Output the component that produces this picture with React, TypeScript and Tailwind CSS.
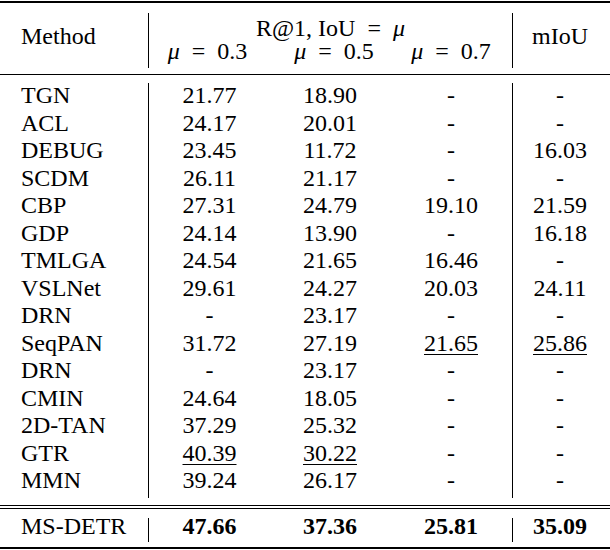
const rows: string[][] = [
  ["TGN", "21.77", "18.90", "-", "-"],
  ["ACL", "24.17", "20.01", "-", "-"],
  ["DEBUG", "23.45", "11.72", "-", "16.03"],
  ["SCDM", "26.11", "21.17", "-", "-"],
  ["CBP", "27.31", "24.79", "19.10", "21.59"],
  ["GDP", "24.14", "13.90", "-", "16.18"],
  ["TMLGA", "24.54", "21.65", "16.46", "-"],
  ["VSLNet", "29.61", "24.27", "20.03", "24.11"],
  ["DRN", "-", "23.17", "-", "-"],
  ["SeqPAN", "31.72", "27.19", "_21.65", "_25.86"],
  ["DRN", "-", "23.17", "-", "-"],
  ["CMIN", "24.64", "18.05", "-", "-"],
  ["2D-TAN", "37.29", "25.32", "-", "-"],
  ["GTR", "_40.39", "_30.22", "-", "-"],
  ["MMN", "39.24", "26.17", "-", "-"],
];

const colW = ["w-[121px]", "w-[120px]", "w-[122px]"];

function Cell({ v }: { v: string }) {
  if (v.startsWith("_")) {
    return (
      <span className="underline decoration-1 underline-offset-[3px]">
        {v.slice(1)}
      </span>
    );
  }
  return <span>{v}</span>;
}

function Mu({ value }: { value?: string }) {
  return (
    <span>
      <span className="italic">μ</span>
      <span className="mx-[12px]">=</span>
      {value}
    </span>
  );
}

function Bar({ className }: { className: string }) {
  return <div className={`w-px bg-black ${className}`} />;
}

export default function App() {
  return (
    <div className="w-[610px] h-[550px] bg-white text-black text-[24px] overflow-hidden font-['Liberation_Serif','Times_New_Roman',serif]">
      <div className="h-px" />
      <div className="h-[2px] bg-black" />

      {/* header */}
      <div className="flex h-[71px]">
        <div className="w-[148px] pl-[21px] pt-[22px] leading-[23px]">Method</div>
        <Bar className="mt-[10px] mb-[6px]" />
        <div className="w-[363px] pt-[14px] leading-[23px]">
          <div className="text-center h-[23px]">
            R@1, IoU
            <span className="mx-[12px]">=</span>
            <span className="italic">μ</span>
          </div>
          <div className="flex h-[23px]">
            <div className={`${colW[0]} text-center pr-[4px]`}>
              <Mu value="0.3" />
            </div>
            <div className={`${colW[1]} text-center pl-[8px]`}>
              <Mu value="0.5" />
            </div>
            <div className={`${colW[2]} text-center`}>
              <Mu value="0.7" />
            </div>
          </div>
        </div>
        <Bar className="mt-[10px] mb-[6px]" />
        <div className="flex-1 pr-[3px] pt-[22px] leading-[23px] text-center">mIoU</div>
      </div>
      <div className="h-px bg-black" />

      {/* body */}
      <div className="flex h-[430px]">
        <div className="w-[148px] pl-[21px] pt-[7px] leading-[27.5px]">
          {rows.map((r, i) => (
            <div key={i}>{r[0]}</div>
          ))}
        </div>
        <Bar className="mt-[8px] mb-[7px]" />
        {[1, 2, 3].map((c) => (
          <div key={c} className={`${colW[c - 1]} pt-[7px] leading-[27.5px] text-center`}>
            {rows.map((r, i) => (
              <div key={i}>
                <Cell v={r[c]} />
              </div>
            ))}
          </div>
        ))}
        <Bar className="mt-[8px] mb-[7px]" />
        <div className="flex-1 pr-[3px] pt-[7px] leading-[27.5px] text-center">
          {rows.map((r, i) => (
            <div key={i}>
              <Cell v={r[4]} />
            </div>
          ))}
        </div>
      </div>

      <div className="h-px bg-black" />
      <div className="h-[2px]" />
      <div className="h-px bg-black" />

      {/* ours */}
      <div className="flex h-[38px] leading-[27.5px]">
        <div className="w-[148px] pl-[21px] pt-[4px]">MS-DETR</div>
        <Bar className="mt-[9px] mb-[5px]" />
        <div className={`${colW[0]} pt-[4px] text-center font-bold`}>47.66</div>
        <div className={`${colW[1]} pt-[4px] text-center font-bold`}>37.36</div>
        <div className={`${colW[2]} pt-[4px] text-center font-bold`}>25.81</div>
        <Bar className="mt-[9px] mb-[5px]" />
        <div className="flex-1 pr-[3px] pt-[4px] text-center font-bold">35.09</div>
      </div>
      <div className="h-[2px] bg-black" />
    </div>
  );
}
